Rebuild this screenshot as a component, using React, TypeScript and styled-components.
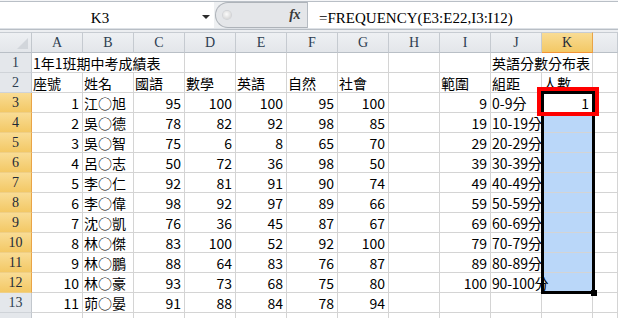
import React from 'react';
import styled, { createGlobalStyle, css } from 'styled-components';

const GlobalStyle = createGlobalStyle`
  html, body { margin: 0; padding: 0; background: #ffffff; }
  body { width: 618px; height: 318px; overflow: hidden; }
  #root { width: 618px; height: 318px; }
`;

const Window = styled.div`
  width: 618px;
  height: 318px;
  display: flex;
  flex-direction: column;
  background: #f4f5f7;
  overflow: hidden;
`;

const FormulaBar = styled.div`
  display: flex;
  flex: 0 0 auto;
  height: 27px;
  margin-top: 1px;
  box-sizing: border-box;
  border-top: 1px solid #b9bfc6;
  background: #eef0f2;
`;

const barText = css`
  font-family: "Liberation Serif", serif;
  font-size: 15px;
  line-height: 18px;
  padding-top: 7px;
  color: #000;
  white-space: nowrap;
`;

const NameBox = styled.div`
  width: 214px;
  display: flex;
  align-items: flex-start;
  background: #ffffff;
`;

const NameText = styled.div`
  ${barText};
  flex: 1;
  text-align: center;
`;

const DropArrow = styled.div`
  width: 0;
  height: 0;
  margin: 13px 4px 0 2px;
  border-left: 4px solid transparent;
  border-right: 4px solid transparent;
  border-top: 4px solid #2b2b2b;
`;

const Splitter = styled.div`
  width: 92px;
  margin-left: 1px;
  display: flex;
  align-items: center;
  box-sizing: border-box;
  background: #e4e6e9;
  border: 1px solid #aeb3b9;
  border-right: none;
  border-radius: 13px 0 0 13px;
`;

const Grip = styled.div`
  width: 8px;
  height: 8px;
  margin-left: 7px;
  border-radius: 50%;
  background: radial-gradient(circle at 45% 40%, #fbfbfb 0%, #e2e2e2 55%, #c9c9c9 100%);
  box-shadow: 0 0 0 1px #d2d4d7;
`;

const FxLabel = styled.div`
  margin-left: auto;
  margin-right: 7px;
  font-family: "Liberation Serif", serif;
  font-style: italic;
  font-weight: bold;
  font-size: 14px;
  color: #3a3a3a;
  letter-spacing: -0.5px;
`;

const FormulaBox = styled.div`
  ${barText};
  flex: 1;
  background: #ffffff;
  border-left: 1px solid #b5bbc2;
  padding-left: 11px;
`;

const Separator = styled.div`
  flex: 0 0 4px;
  background: linear-gradient(
    to bottom,
    #dde1e6 0px,
    #dde1e6 1px,
    #b8bec5 1px,
    #b8bec5 2px,
    #eceef1 2px,
    #eceef1 4px
  );
`;

const Sheet = styled.div`
  flex: 1;
  display: grid;
  grid-template-columns: 32px repeat(11, 51px) 1fr;
  grid-template-rows: 21px repeat(14, 20px);
  background: #ffffff;
  overflow: hidden;
`;

const activeHeader = css`
  background: linear-gradient(to bottom, #f9dc94, #f3c865);
  color: #1e2a38;
`;

const Corner = styled.div`
  grid-row: 1;
  grid-column: 1;
  box-sizing: border-box;
  border-top: 1px solid #c7ccd2;
  border-right: 1px solid #c2c7cd;
  border-bottom: 1px solid #b9bfc6;
  background: linear-gradient(to bottom, #eef0f3, #e3e6ea);
  display: flex;
  align-items: flex-end;
  justify-content: flex-end;
`;

const CornerTriangle = styled.div`
  width: 0;
  height: 0;
  margin: 0 3px 3px 0;
  border-left: 11px solid transparent;
  border-bottom: 11px solid #d2d6db;
`;

const ColHeader = styled.div<{ $col: number; $active?: boolean }>`
  grid-row: 1;
  grid-column: ${(p) => p.$col};
  box-sizing: border-box;
  display: flex;
  align-items: center;
  justify-content: center;
  border-top: 1px solid #c7ccd2;
  border-right: 1px solid ${(p) => (p.$active ? '#e9a447' : '#c5cad0')};
  border-bottom: 1px solid ${(p) => (p.$active ? '#f29436' : '#b9bfc6')};
  background: linear-gradient(to bottom, #eef0f3, #e3e6ea);
  color: #2d3d50;
  font-family: "Liberation Serif", serif;
  font-size: 14px;
  ${(p) => p.$active && activeHeader};
`;

const RowHeader = styled.div<{ $row: number; $active?: boolean }>`
  grid-row: ${(p) => p.$row};
  grid-column: 1;
  box-sizing: border-box;
  display: flex;
  align-items: center;
  justify-content: center;
  border-right: 1px solid ${(p) => (p.$active ? '#e9a447' : '#c2c7cd')};
  border-bottom: 1px solid ${(p) => (p.$active ? '#efcf86' : '#cfd3d8')};
  background: #e4e7eb;
  color: #2d3d50;
  font-family: "Liberation Serif", serif;
  font-size: 14px;
  overflow: hidden;
  ${(p) => p.$active && activeHeader};
`;

const Cell = styled.div<{
  $row: number;
  $col: number;
  $span: number;
  $align: 'left' | 'right';
  $selected?: boolean;
  $spill?: boolean;
}>`
  grid-row: ${(p) => p.$row};
  grid-column: ${(p) => p.$col} / span ${(p) => p.$span};
  box-sizing: border-box;
  min-width: 0;
  display: flex;
  align-items: center;
  justify-content: ${(p) => (p.$align === 'right' ? 'flex-end' : 'flex-start')};
  padding: ${(p) => (p.$align === 'right' ? '0 3px 0 0' : '0 0 0 1px')};
  border-right: 1px solid #d4d4d4;
  border-bottom: 1px solid #d4d4d4;
  background: ${(p) => (p.$selected ? '#bad7f9' : '#ffffff')};
  font-family: "Noto Sans CJK TC", sans-serif;
  font-size: 14px;
  color: #000;
  white-space: nowrap;
  overflow: ${(p) => (p.$spill ? 'visible' : 'hidden')};
  ${(p) =>
    p.$spill &&
    css`
      position: relative;
      z-index: 1;
      letter-spacing: -0.2px;
    `};
`;

const SelectionBox = styled.div`
  grid-row: 4 / 14;
  grid-column: 12;
  margin: -2px -2px -1px -1px;
  position: relative;
  z-index: 2;
  border: 3px solid #000;
  pointer-events: none;
`;

const FillHandle = styled.div`
  position: absolute;
  right: -5px;
  bottom: -5px;
  width: 6px;
  height: 6px;
  background: #000;
`;

const RedMark = styled.div`
  grid-row: 4;
  grid-column: 12;
  margin: -6px -6px -3px -5px;
  position: relative;
  z-index: 3;
  border: 4px solid #ff0000;
  pointer-events: none;
`;

type Align = 'left' | 'right';
interface CellData {
  text: string;
  align: Align;
  span: number;
}

const columns = ['A', 'B', 'C', 'D', 'E', 'F', 'G', 'H', 'I', 'J', 'K'];

const students: (string | number)[][] = [
  [1, '江○旭', 95, 100, 100, 95, 100],
  [2, '吳○德', 78, 82, 92, 98, 85],
  [3, '吳○智', 75, 6, 8, 65, 70],
  [4, '呂○志', 50, 72, 36, 98, 50],
  [5, '李○仁', 92, 81, 91, 90, 74],
  [6, '李○偉', 98, 92, 97, 89, 66],
  [7, '沈○凱', 76, 36, 45, 87, 67],
  [8, '林○傑', 83, 100, 52, 92, 100],
  [9, '林○鵬', 88, 64, 83, 76, 87],
  [10, '林○豪', 93, 73, 68, 75, 80],
  [11, '茆○晏', 91, 88, 84, 78, 94],
];

const bins: [number, string][] = [
  [9, '0-9分'],
  [19, '10-19分'],
  [29, '20-29分'],
  [39, '30-39分'],
  [49, '40-49分'],
  [59, '50-59分'],
  [69, '60-69分'],
  [79, '70-79分'],
  [89, '80-89分'],
  [100, '90-100分'],
];

const headings = ['座號', '姓名', '國語', '數學', '英語', '自然', '社會', '', '範圍', '組距', '人數'];

function cellAt(r: number, c: number): CellData | null {
  const blank: CellData = { text: '', align: 'left', span: 1 };
  if (c === 11) return blank;
  if (r === 1) {
    if (c === 0) return { text: '1年1班期中考成績表', align: 'left', span: 3 };
    if (c === 1 || c === 2) return null;
    if (c === 9) return { text: '英語分數分布表', align: 'left', span: 2 };
    if (c === 10) return null;
    return blank;
  }
  if (r === 2) return { text: headings[c], align: 'left', span: 1 };
  if (r >= 3 && r <= 13) {
    const s = students[r - 3];
    if (c <= 6) return { text: String(s[c]), align: c === 1 ? 'left' : 'right', span: 1 };
    if (r <= 12) {
      const b = bins[r - 3];
      if (c === 8) return { text: String(b[0]), align: 'right', span: 1 };
      if (c === 9) return { text: b[1], align: 'left', span: 1 };
      if (c === 10 && r === 3) return { text: '1', align: 'right', span: 1 };
    }
    return blank;
  }
  return blank;
}

export default function App() {
  const rows = Array.from({ length: 14 }, (_, i) => i + 1);
  const cols = Array.from({ length: 12 }, (_, i) => i);

  return (
    <>
      <GlobalStyle />
      <Window>
        <FormulaBar>
          <NameBox>
            <NameText>K3</NameText>
            <DropArrow />
          </NameBox>
          <Splitter>
            <Grip />
            <FxLabel>fx</FxLabel>
          </Splitter>
          <FormulaBox>=FREQUENCY(E3:E22,I3:I12)</FormulaBox>
        </FormulaBar>
        <Separator />
        <Sheet>
          <Corner>
            <CornerTriangle />
          </Corner>
          {columns.map((name, i) => (
            <ColHeader key={name} $col={i + 2} $active={name === 'K'}>
              {name}
            </ColHeader>
          ))}
          <ColHeader $col={13} />
          {rows.map((r) => (
            <RowHeader key={`h${r}`} $row={r + 1} $active={r >= 3 && r <= 12}>
              {r <= 13 ? r : ''}
            </RowHeader>
          ))}
          {rows.map((r) =>
            cols.map((c) => {
              const d = cellAt(r, c);
              if (!d) return null;
              return (
                <Cell
                  key={`${r}-${c}`}
                  $row={r + 1}
                  $col={c + 2}
                  $span={d.span}
                  $align={d.align}
                  $selected={c === 10 && r >= 4 && r <= 12}
                  $spill={c === 9 && r === 12}
                >
                  {d.text}
                </Cell>
              );
            })
          )}
          <SelectionBox>
            <FillHandle />
          </SelectionBox>
          <RedMark />
        </Sheet>
      </Window>
    </>
  );
}
